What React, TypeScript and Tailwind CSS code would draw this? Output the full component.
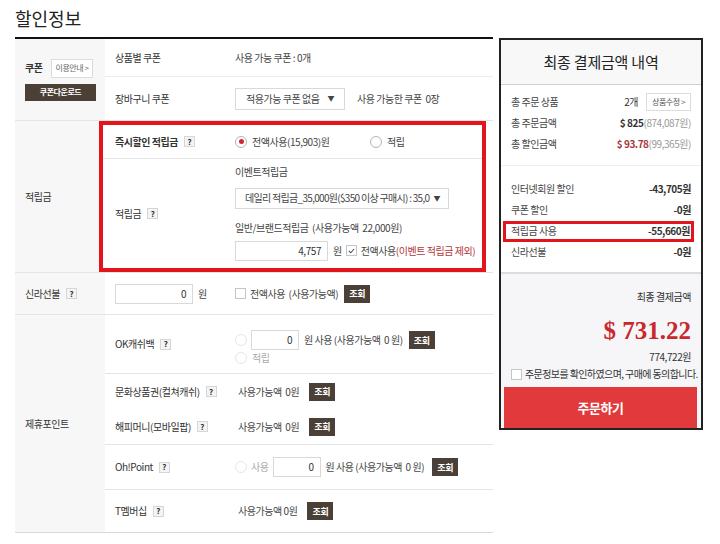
import clsx from "clsx"

const Q = () => (
    <span className="inline-flex items-center justify-center w-[11px] h-[11px] ml-[6px] border border-[#d6d6d6] bg-[#f4f4f4] text-[8px] font-bold leading-none tracking-normal text-[#333]">?</span>
)

const Jo = ({ className }: { className?: string }) => (
    <span className={clsx("inline-flex items-center justify-center w-[26px] h-[18px] bg-[#4a4038] text-white text-[9px] font-bold leading-none", className)}>조회</span>
)

const Radio = ({ on, off }: { on?: boolean; off?: boolean }) => (
    <span className={clsx("inline-flex shrink-0 items-center justify-center w-[12px] h-[12px] rounded-full border bg-white", off ? "border-[#e6e6e6]" : "border-[#b5b5b5]")}>
        {on && <span className="w-[5px] h-[5px] rounded-full bg-[#d2252d]" />}
    </span>
)

const Box = ({ w, v }: { w: string; v: string }) => (
    <span className={clsx("inline-flex shrink-0 items-center justify-end h-[20px] pr-[6px] border border-[#d9d9d9] bg-white text-[10px] text-[#333]", w)}>{v}</span>
)

const Check = ({ on }: { on?: boolean }) => (
    <span className="inline-flex shrink-0 items-center justify-center w-[11px] h-[11px] border border-[#c5c5c5] bg-white">
        {on && (
            <svg width="7" height="6" viewBox="0 0 7 6"><path d="M1 3l1.8 1.8L6 1" fill="none" stroke="#555" strokeWidth="1.1" /></svg>
        )}
    </span>
)

export default function App() {
    return (
        <div className="flex w-[720px] h-[544px] bg-white text-[10px] text-[#444] whitespace-nowrap tracking-[-0.45px] font-['Noto_Sans_CJK_KR',sans-serif] leading-none">
            {/* 왼쪽 할인정보 */}
            <div className="w-[493px] pl-[15px]">
                <div className="h-[37px] pt-[9px] text-[18px] tracking-normal text-[#222]">할인정보</div>
                <div className="border-t-2 border-[#111]">

                    {/* 쿠폰 */}
                    <div className="flex h-[82px] border-b border-[#e4e4e4]">
                        <div className="w-[90px] bg-[#f7f7f7] pl-[10px] flex flex-col justify-center gap-[6px]">
                            <div className="flex items-center gap-[8px]">
                                <span className="text-[10px] font-bold text-[#333]">쿠폰</span>
                                <span className="inline-flex items-center h-[19px] px-[4px] border border-[#dcdcdc] bg-white text-[8px] text-[#666]">이용안내 &gt;</span>
                            </div>
                            <span className="inline-flex items-center justify-center w-[71px] h-[17px] bg-[#4b4036] text-white text-[8px] font-bold">쿠폰다운로드</span>
                        </div>
                        <div className="flex-1 flex flex-col">
                            <div className="flex items-center h-[38px] border-b border-[#ececec]">
                                <span className="w-[130px] pl-[10px] text-[#333]">상품별 쿠폰</span>
                                <span>사용 가능 쿠폰 : 0개</span>
                            </div>
                            <div className="flex items-center flex-1">
                                <span className="w-[130px] pl-[10px] text-[#333]">장바구니 쿠폰</span>
                                <span className="inline-flex items-center justify-between w-[110px] h-[22px] px-[10px] border border-[#d9d9d9] text-[#444]">
                                    적용가능 쿠폰 없음<span className="text-[7px]">▼</span>
                                </span>
                                <span className="ml-[12px]">사용 가능한 쿠폰&nbsp; 0장</span>
                            </div>
                        </div>
                    </div>

                    {/* 적립금 */}
                    <div className="flex h-[152px] border-b border-[#e4e4e4]">
                        <div className="w-[84px] bg-[#f7f7f7] pl-[10px] flex items-center text-[#333]">적립금</div>
                        <div className="w-[387px] border-4 border-[#e2141c] flex flex-col">
                            <div className="flex items-center h-[34px] border-b border-[#e4e4e4]">
                                <span className="w-[132px] pl-[12px] flex items-center font-bold text-[#333]">즉시할인 적립금<Q /></span>
                                <span className="flex items-center gap-[5px] w-[135px]"><Radio on />전액사용(15,903)원</span>
                                <span className="flex items-center gap-[5px]"><Radio />적립</span>
                            </div>
                            <div className="flex items-center flex-1">
                                <span className="w-[132px] pl-[12px] flex items-center text-[#333]">적립금<Q /></span>
                                <div className="flex flex-col">
                                    <span className="h-[12px]">이벤트적립금</span>
                                    <span className="mt-[9px] flex items-center justify-between w-[214px] h-[21px] pl-[9px] pr-[8px] border border-[#d9d9d9] leading-[14px]">
                                        <span className="tracking-[-0.7px]">데일리 적립금_35,000원($350 이상 구매시) : 35,0</span>
                                        <span className="text-[7px]">▼</span>
                                    </span>
                                    <span className="mt-[14px] h-[12px]">일반/브랜드적립금&nbsp; (사용가능액&nbsp; 22,000원)</span>
                                    <div className="mt-[6px] flex items-center">
                                        <Box w="w-[93px]" v="4,757" />
                                        <span className="ml-[5px] mr-[4px]">원</span>
                                        <Check on />
                                        <span className="ml-[4px]">전액사용<span className="text-[#b4363a]">(이벤트 적립금 제외)</span></span>
                                    </div>
                                </div>
                            </div>
                        </div>
                    </div>

                    {/* 신라선불 */}
                    <div className="flex items-center h-[42px] border-b border-[#e4e4e4]">
                        <div className="w-[90px] h-full bg-[#f7f7f7] pl-[10px] flex items-center text-[#333]">신라선불<Q /></div>
                        <div className="pl-[10px] flex items-center">
                            <Box w="w-[78px]" v="0" />
                            <span className="ml-[5px] w-[37px]">원</span>
                            <Check />
                            <span className="ml-[4px]">전액사용&nbsp; (사용가능액)</span>
                            <Jo className="ml-[6px] w-[21px] h-[17px]" />
                        </div>
                    </div>

                    {/* 제휴포인트 */}
                    <div className="flex h-[218px] border-b border-[#d8d8d8]">
                        <div className="w-[90px] bg-[#f7f7f7] pl-[10px] flex items-center text-[#333]">제휴포인트</div>
                        <div className="flex-1 flex flex-col">
                            <div className="flex items-center h-[59px] border-b border-[#e4e4e4]">
                                <span className="w-[130px] pl-[10px] flex items-center text-[#333]">OK캐쉬백<Q /></span>
                                <div className="flex flex-col gap-[2px] pt-[6px]">
                                    <div className="flex items-center">
                                        <Radio off />
                                        <Box w="ml-[4px] w-[48px]" v="0" />
                                        <span className="ml-[5px]">원 사용 (사용가능액&nbsp; 0 원)</span>
                                        <Jo className="ml-[6px]" />
                                    </div>
                                    <div className="flex items-center gap-[5px] text-[#aaa]"><Radio off />적립</div>
                                </div>
                            </div>
                            <div className="flex flex-col justify-center gap-[17px] h-[71px] border-b border-[#e4e4e4]">
                                <div className="flex items-center">
                                    <span className="w-[133px] pl-[10px] flex items-center text-[#333]">문화상품권(컬쳐캐쉬)<Q /></span>
                                    <span>사용가능액&nbsp; 0원</span>
                                    <Jo className="ml-[10px]" />
                                </div>
                                <div className="flex items-center">
                                    <span className="w-[133px] pl-[10px] flex items-center text-[#333]">해피머니(모바일팝)<Q /></span>
                                    <span>사용가능액&nbsp; 0원</span>
                                    <Jo className="ml-[10px]" />
                                </div>
                            </div>
                            <div className="flex items-center h-[45px] border-b border-[#e4e4e4]">
                                <span className="w-[130px] pl-[10px] flex items-center text-[#333]">Oh!Point<Q /></span>
                                <Radio off />
                                <span className="ml-[4px] text-[#aaa]">사용</span>
                                <Box w="ml-[4px] w-[48px]" v="0" />
                                <span className="ml-[5px]">원 사용 (사용가능액&nbsp; 0 원)</span>
                                <Jo className="ml-[8px]" />
                            </div>
                            <div className="flex items-center flex-1">
                                <span className="w-[133px] pl-[10px] flex items-center text-[#333]">T멤버십<Q /></span>
                                <span>사용가능액 0원</span>
                                <Jo className="ml-[10px]" />
                            </div>
                        </div>
                    </div>
                </div>
            </div>

            {/* 오른쪽 최종 결제금액 */}
            <div className="ml-[6px] mt-[38px] w-[204px] h-[392px] border-2 border-[#222] flex flex-col">
                <div className="h-[45px] bg-[#f8f8f8] border-b border-[#cfcfcf] flex items-center justify-center text-[15px] tracking-[-0.2px] text-[#222]">최종 결제금액 내역</div>
                <div className="px-[10px] pt-[7px] h-[82px] border-b border-[#f0f0f0] flex flex-col">
                    <div className="flex items-center justify-between h-[21px]">
                        <span>총 주문 상품</span>
                        <span className="flex items-center">
                            <span className="text-[#333]">2개</span>
                            <span className="ml-[8px] inline-flex items-center h-[18px] px-[5px] border border-[#dcdcdc] text-[8px] text-[#555]">상품수정 &gt;</span>
                        </span>
                    </div>
                    <div className="flex items-center justify-between h-[21px]">
                        <span>총 주문금액</span>
                        <span><b className="text-[#333]">$ 825</b><span className="text-[#999]">(874,087원)</span></span>
                    </div>
                    <div className="flex items-center justify-between h-[21px]">
                        <span>총 할인금액</span>
                        <span><b className="text-[#a8393c]">$ 93.78</b><span className="text-[#999]">(99,365원)</span></span>
                    </div>
                </div>
                <div className="px-[10px] pt-[13px] h-[109px] border-b-2 border-[#dcdcdc] flex flex-col">
                    <div className="flex items-center justify-between h-[21px]">
                        <span>인터넷회원 할인</span><b className="text-[#333]">-43,705원</b>
                    </div>
                    <div className="flex items-center justify-between h-[21px]">
                        <span>쿠폰 할인</span><b className="text-[#333]">-0원</b>
                    </div>
                    <div className="flex items-center justify-between h-[21px] -ml-[8px] -mr-[3px] pl-[5px] pr-[1px] border-[3px] border-[#e2141c]">
                        <span>적립금 사용</span><b className="text-[#333]">-55,660원</b>
                    </div>
                    <div className="flex items-center justify-between h-[21px]">
                        <span>신라선불</span><b className="text-[#333]">-0원</b>
                    </div>
                </div>
                <div className="flex-1 bg-[#f6f6f8] flex flex-col items-end pt-[18px] pr-[10px] pl-[3px]">
                    <span className="text-[10px] text-[#333]">최종 결제금액</span>
                    <span className="mt-[16px] text-[25px] font-bold tracking-normal text-[#c9282e] font-['Liberation_Serif',serif]">$ 731.22</span>
                    <span className="mt-[9px] text-[10px] text-[#333]">774,722원</span>
                    <div className="mt-[7px] self-start ml-[7px] flex items-center gap-[3px] text-[10px] tracking-[-0.6px] text-[#333]">
                        <span className="w-[11px] h-[11px] border border-[#c5c5c5] bg-white" />
                        주문정보를 확인하였으며, 구매에 동의합니다.
                    </div>
                    <button className="mt-[7px] self-stretch mr-[-6px] h-[41px] bg-[#e23a3c] text-white text-[13px] font-bold">주문하기</button>
                </div>
            </div>
        </div>
    )
}
